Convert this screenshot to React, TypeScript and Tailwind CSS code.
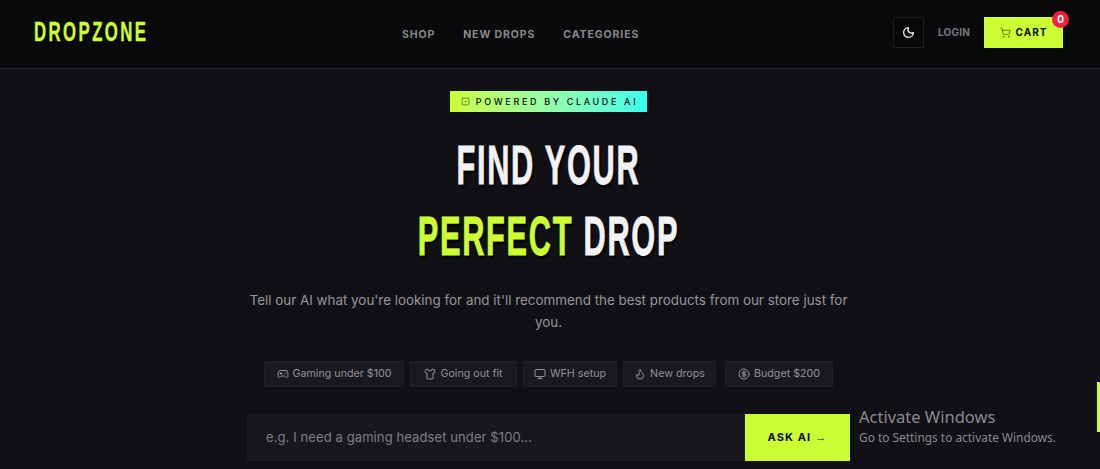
import { Moon, ShoppingCart, Gamepad2, Shirt, Monitor, Flame, CircleDollarSign, SquareDot } from "lucide-react";

const display = "font-['Liberation_Sans',sans-serif] font-bold";
const body = "font-['Inter','Noto_Sans',sans-serif]";

const chips = [
  { Icon: Gamepad2, label: "Gaming under $100", cls: "w-[140px]" },
  { Icon: Shirt, label: "Going out fit", cls: "w-[107px] ml-[6px]" },
  { Icon: Monitor, label: "WFH setup", cls: "w-[94px] ml-[6px]" },
  { Icon: Flame, label: "New drops", cls: "w-[93px] ml-[6px]" },
  { Icon: CircleDollarSign, label: "Budget $200", cls: "w-[108px] ml-[9px]" },
];

export default function App() {
  return (
    <div className={`relative h-[469px] w-[1100px] overflow-hidden bg-[#111014] ${body}`}>
      <header className="flex h-[69px] items-center border-b border-[#26252a] bg-[#0a0a0c] pl-[34px] pr-[37px]">
        <div className="w-[368px]">
          <div className={`${display} mb-[5px] inline-block origin-left scale-x-[0.6] text-[28px] leading-none tracking-[4px] text-[#ccff33] [-webkit-text-stroke:0.4px_#ccff33] [text-shadow:2px_2px_1px_#000]`}>DROPZONE</div>
        </div>
        <nav className="mt-px flex gap-[28px] text-[10.5px] font-bold tracking-[0.9px] text-[#88888c]">
          <span>SHOP</span>
          <span>NEW DROPS</span>
          <span>CATEGORIES</span>
        </nav>
        <div className="mb-[3px] ml-auto flex items-center">
          <button className="flex h-[31px] w-[31px] items-center justify-center border border-[#1e1e22] bg-[#08080a] text-[#e8e8e8]">
            <Moon size={13} fill="none" strokeWidth={2.6} />
          </button>
          <span className="ml-[14px] text-[10px] font-bold tracking-[0.2px] text-[#77777b]">LOGIN</span>
          <button className="relative ml-[14px] flex h-[31px] w-[79px] items-center justify-center gap-[5px] bg-[#ccff33] text-[10px] font-bold tracking-[1px] text-[#0a0a0c]">
            <ShoppingCart size={11} className="text-[#5d7016]" />
            CART
            <span className="absolute right-[-6px] top-[-6px] flex h-[17px] w-[17px] items-center justify-center rounded-full bg-[#f0213f] text-[10px] font-bold tracking-normal text-white">0</span>
          </button>
        </div>
      </header>

      <main className="flex w-[1097px] flex-col items-center pt-[22px]">
        <div className="flex h-[21px] w-[197px] items-center justify-center gap-[6px] bg-gradient-to-r from-[#ccff33] to-[#33ffee] pl-[2px] text-[9px] font-medium tracking-[2.65px] text-[#0a0a0c]">
          <SquareDot size={9} className="text-[#4d6a1d]" />
          POWERED BY CLAUDE AI
        </div>
        <h1 className={`${display} mt-[18px] text-center text-[55px] leading-[71px] tracking-[3px] text-[#f2f2f5] [text-shadow:3px_3px_2px_#050505]`}>
          <div className="scale-x-[0.56] [-webkit-text-stroke:0.8px_#f2f2f5]">FIND YOUR</div>
          <div className="scale-x-[0.56] [-webkit-text-stroke:0.8px_#f2f2f5]">
            <span className="text-[#ccff33] [-webkit-text-stroke:0.8px_#ccff33]">PERFECT</span> DROP
          </div>
        </h1>
        <p className="mt-[17px] w-[610px] text-center text-[13.4px] leading-[22px] text-[#97969b]">
          Tell our AI what you're looking for and it'll recommend the best products from our store just for you.
        </p>
        <div className="mt-[28px] flex">
          {chips.map(({ Icon, label, cls }) => (
            <div key={label} className={`flex h-[26px] ${cls} items-center justify-center gap-1 border border-[#1f1e23] bg-[#1a191d] text-[10.7px] text-[#929296]`}>
              <Icon size={12} />
              {label}
            </div>
          ))}
        </div>
        <div className="mt-[27px] flex h-[47px] w-[603px] bg-[#18171b]">
          <div className="flex flex-1 items-center border border-[#1c1b20] pl-[18px] text-[13px] tracking-[0.1px] text-[#7f7e83]">
            e.g. I need a gaming headset under $100...
          </div>
          <button className="flex w-[105px] items-center justify-center gap-1 bg-[#ccff33] text-[11px] font-bold tracking-[1.1px] text-[#0a0a0c]">
            ASK AI <span className="font-['Liberation_Sans',sans-serif] font-normal">→</span>
          </button>
        </div>
      </main>

      <div className="absolute right-0 top-[382px] h-[50px] w-[3px] bg-[#ccff33]" />
      <div className="absolute left-[859px] top-[406px] font-['Noto_Sans',sans-serif] text-[#8a8a8e]">
        <div className="text-[16.5px] leading-[22px]">Activate Windows</div>
        <div className="text-[11.9px] leading-[18px]">Go to Settings to activate Windows.</div>
      </div>
    </div>
  );
}
